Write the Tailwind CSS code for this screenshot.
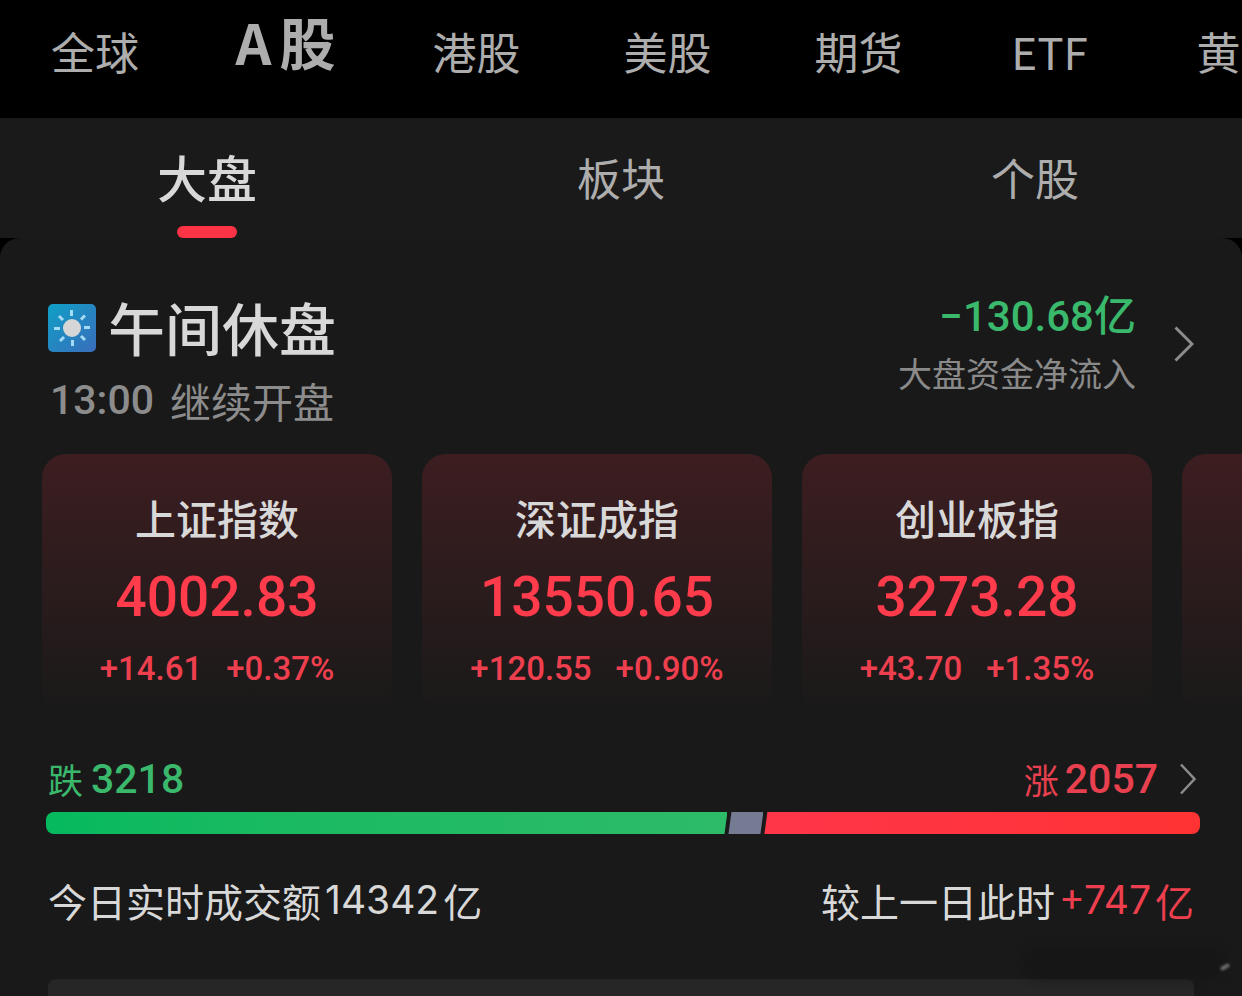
<!DOCTYPE html>
<html lang="zh-CN">

<head>
    <meta charset="UTF-8">
    <meta name="viewport" content="width=device-width, initial-scale=1.0">
    <title>A股大盘</title>
    <script src="https://cdn.jsdelivr.net/npm/@tailwindcss/browser@4"></script>
</head>

<body class="bg-black text-[#d8d8d8] font-['Noto_Sans_CJK_SC',sans-serif] min-h-screen flex flex-col overflow-x-hidden">

    <!-- Markets -->
    <nav class="flex h-[118px] overflow-hidden text-[44px] leading-[102px] text-[#adadad] whitespace-nowrap">
        <a href="#" class="w-[190px] shrink-0 text-center">全球</a>
        <a href="#" class="w-[191px] shrink-0 flex justify-center gap-2 text-[56px] leading-[82px] font-bold"><span>A</span><span>股</span></a>
        <a href="#" class="w-[191px] shrink-0 text-center">港股</a>
        <a href="#" class="w-[191px] shrink-0 text-center">美股</a>
        <a href="#" class="w-[191px] shrink-0 text-center">期货</a>
        <a href="#" class="w-[191px] shrink-0 text-center">ETF</a>
        <a href="#" class="w-[191px] shrink-0 text-center">黄金</a>
    </nav>

    <!-- Tabs -->
    <div class="grid grid-cols-3 h-[120px] bg-[#1a1a1a] text-[44px] leading-[112px] text-[#adadad]">
        <button class="relative pb-1 text-[50px] font-medium text-[#d8d8d8]">大盘
            <span class="absolute bottom-0 left-1/2 -translate-x-1/2 w-[60px] h-3 rounded-md bg-[#ff3346]"></span>
        </button>
        <button class="pb-0.5">板块</button>
        <button class="pb-0.5">个股</button>
    </div>

    <main class="flex-1 flex flex-col bg-[#191919] rounded-t-[20px]">

        <header class="flex justify-between items-start px-12 pt-12 pb-4">
            <div class="pt-1">
                <h1 class="flex items-center gap-3 text-[57px] leading-[72px] font-medium">
                    <svg class="w-12 h-12 mt-1" viewBox="0 0 48 48" fill="none">
                        <defs>
                            <linearGradient id="sky" x1="0" y1="0" x2="1" y2="1">
                                <stop offset="0" stop-color="#0fa0c6" />
                                <stop offset="1" stop-color="#3a6cbc" />
                            </linearGradient>
                        </defs>
                        <rect width="48" height="48" rx="5" fill="url(#sky)" />
                        <circle cx="24" cy="24" r="9" fill="#d6d6d6" />
                        <path stroke="#a5dcf5" stroke-width="3" d="M23.500 6v6M24.500 36v6M6 24.500h6M36 23.500h6M11 12l4 4M37 11.500l-4 4M12 37l4-4M37 36l-4-4" />
                    </svg>
                    午间休盘
                </h1>
                <p class="flex gap-4 pl-0.5 text-[41px] leading-[76px] text-[#8c8c8c]"><span class="font-[Roboto] font-medium">13:00</span><span>继续开盘</span></p>
            </div>
            <a href="#" class="flex items-center gap-[38px]">
                <div class="text-right">
                    <p class="font-['Roboto','Noto_Sans_CJK_SC',sans-serif] text-[42px] leading-[62px] font-medium text-[#3ab86c]">−130.68亿</p>
                    <p class="text-[34px] leading-[50px] text-[#8a8a8a]">大盘资金净流入</p>
                </div>
                <svg class="w-5 h-9 mt-1" viewBox="0 0 20 36" fill="none" stroke="#8c8c8c" stroke-width="3">
                    <path d="M1.500 1.500L18 18L1.500 34.500" />
                </svg>
            </a>
        </header>

        <!-- Indices -->
        <section class="flex gap-[30px] pl-[42px] overflow-hidden text-center whitespace-nowrap">
            <article class="w-[350px] shrink-0 rounded-3xl bg-linear-to-b from-[#3d1d20] to-[#191919] pt-8 pb-[22px]">
                <h2 class="text-[41px] leading-[62px] font-medium">上证指数</h2>
                <p class="font-[Roboto] text-[55px] leading-[98px] font-medium text-[#ff3b4c]">4002.83</p>
                <p class="flex justify-center gap-6 font-[Roboto] text-[33px] leading-[46px] font-medium text-[#ee3f4f]"><span>+14.61</span><span>+0.37%</span></p>
            </article>
            <article class="w-[350px] shrink-0 rounded-3xl bg-linear-to-b from-[#3d1d20] to-[#191919] pt-8 pb-[22px]">
                <h2 class="text-[41px] leading-[62px] font-medium">深证成指</h2>
                <p class="font-[Roboto] text-[55px] leading-[98px] font-medium text-[#ff3b4c]">13550.65</p>
                <p class="flex justify-center gap-6 font-[Roboto] text-[33px] leading-[46px] font-medium text-[#ee3f4f]"><span>+120.55</span><span>+0.90%</span></p>
            </article>
            <article class="w-[350px] shrink-0 rounded-3xl bg-linear-to-b from-[#3d1d20] to-[#191919] pt-8 pb-[22px]">
                <h2 class="text-[41px] leading-[62px] font-medium">创业板指</h2>
                <p class="font-[Roboto] text-[55px] leading-[98px] font-medium text-[#ff3b4c]">3273.28</p>
                <p class="flex justify-center gap-6 font-[Roboto] text-[33px] leading-[46px] font-medium text-[#ee3f4f]"><span>+43.70</span><span>+1.35%</span></p>
            </article>
            <article class="w-[350px] shrink-0 rounded-3xl bg-linear-to-b from-[#3d1d20] to-[#191919]"></article>
        </section>

        <!-- Fallers and risers -->
        <section class="pt-8 pl-[46px] pr-[42px]">
            <div class="flex justify-between text-[35px] leading-[66px]">
                <p class="flex gap-2 pl-0.5 text-[#3ab86c]"><span>跌</span><span class="font-[Roboto] text-[41px] font-medium">3218</span></p>
                <a href="#" class="flex items-center gap-[22px] pr-1 text-[#e8404f]">
                    <span class="flex gap-1.5"><span>涨</span><span class="font-[Roboto] text-[41px] font-medium">2057</span></span>
                    <svg class="w-4 h-8" viewBox="0 0 16 32" fill="none" stroke="#8c8c8c" stroke-width="2.500">
                        <path d="M1 1.500L14.500 16L1 30.500" />
                    </svg>
                </a>
            </div>
            <div class="flex gap-px h-[22px] rounded-lg overflow-hidden">
                <div class="flex-[3218] bg-linear-to-r from-[#05b95e] to-[#2dbb69] [clip-path:polygon(0_0,100%_0,calc(100%-3px)_100%,0_100%)]"></div>
                <div class="flex-[165] bg-[#757b92] [clip-path:polygon(3px_0,100%_0,calc(100%-3px)_100%,0_100%)]"></div>
                <div class="flex-[2057] bg-linear-to-r from-[#ff3549] to-[#ff3333] [clip-path:polygon(3px_0,100%_0,100%_100%,0_100%)]"></div>
            </div>
        </section>

        <section class="flex justify-between px-12 pt-[34px] pb-[47px] text-[39px] leading-[64px] whitespace-nowrap">
            <p class="flex gap-1"><span>今日实时成交额</span><span class="font-[Inter]">14342</span><span>亿</span></p>
            <p class="flex gap-1"><span>较上一日此时</span><span class="flex gap-1 text-[#ee3f4f]"><span class="font-[Inter]">+747</span><span>亿</span></span></p>
        </section>

        <section class="relative flex-1 mx-12 rounded-t-lg bg-[#262626]">
            <!-- soft shadow over the card's corner -->
            <div class="absolute -top-8 -right-8 w-[205px] h-8 rounded-full bg-[#161616]/90 blur-xs"></div>
            <div class="absolute -top-3.5 -right-9 w-2.5 h-1 rounded-full -rotate-30 bg-[#6a6a6a] blur-[1px]"></div>
        </section>
    </main>
</body>

</html>
